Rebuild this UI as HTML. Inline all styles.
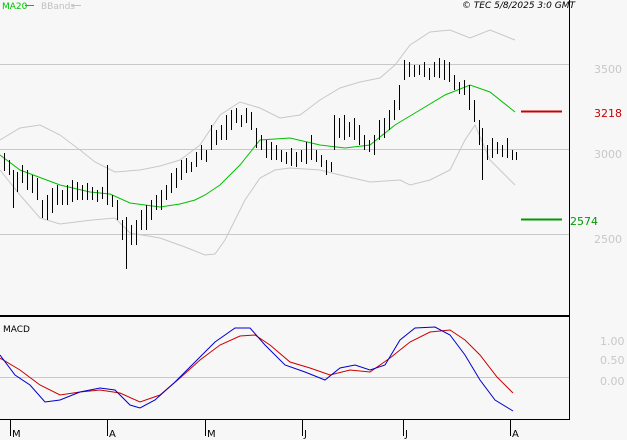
<!DOCTYPE html>
<html><head><style>
html,body{margin:0;padding:0;background:#f7f7f7;width:627px;height:440px;overflow:hidden;font-family:"DejaVu Sans","Liberation Sans",sans-serif}
svg{position:absolute;left:0;top:0}
</style></head><body>
<svg width="627" height="440" xmlns="http://www.w3.org/2000/svg" font-family="DejaVu Sans, Liberation Sans, sans-serif">
<rect width="627" height="440" fill="#f7f7f7"/>
<g stroke="#c8c8c8" stroke-width="1">
<line x1="0" y1="64.5" x2="569" y2="64.5"/>
<line x1="0" y1="149.5" x2="569" y2="149.5"/>
<line x1="0" y1="234.5" x2="569" y2="234.5"/>
<line x1="0" y1="377.5" x2="569" y2="377.5"/>
</g>
<text x="2" y="9" font-size="9" fill="#00c000">MA20</text>
<line x1="25" y1="5.5" x2="34" y2="5.5" stroke="#00c000"/>
<text x="41" y="9" font-size="9" fill="#c0c0c0">BBands</text>
<line x1="72" y1="5.5" x2="81" y2="5.5" stroke="#c0c0c0"/>
<text x="575" y="8" font-size="9" fill="#000" font-style="italic" text-anchor="end">© TEC 5/8/2025 3:0 GMT</text>
<polyline fill="none" stroke="#c8c8c8" points="0,140 20,128 40,125 60,135 80,150 95,162 115,172 140,170 160,166 180,160 200,145 220,115 240,102 260,108 280,118 300,115 320,100 340,88 360,82 380,78 395,65 410,45 430,32 450,30 470,38 490,30 515,40"/>
<polyline fill="none" stroke="#c8c8c8" points="0,170 20,195 40,218 60,224 92,220 115,218 130,233 160,238 185,247 205,255 215,254 225,240 245,200 260,178 275,170 290,168 320,170 340,175 370,182 400,180 410,185 430,180 450,170 465,140 475,125 490,160 515,185"/>
<polyline fill="none" stroke="#00c000" points="0,155 20,170 60,185 90,192 110,194 130,203 160,207 180,204 195,200 205,195 220,185 240,165 260,140 290,138 320,145 345,148 370,145 395,125 420,110 445,95 470,85 490,92 515,112"/>
<path fill="none" stroke="#000" stroke-width="1" shape-rendering="crispEdges" transform="translate(0.5,0)" d="
M4,153v18 M9,160v15 M13,170v38 M17,172v20 M22,165v18 M27,170v20 M32,175v18 M37,178v22 M42,200v18 M47,195v25 M52,188v25 M57,185v20 M62,190v15 M67,185v20 M72,180v22 M77,182v18 M82,185v15 M87,183v17 M92,187v13 M97,190v12 M102,187v12 M107,165v40 M112,195v12 M117,200v20 M122,220v20 M126,217v52 M131,225v20 M136,220v25 M141,210v20 M146,205v25 M151,200v20 M156,195v15 M161,190v20 M166,185v15 M171,173v20 M176,168v20 M181,160v20 M186,158v15 M191,162v10 M196,152v15 M201,145v15 M206,150v12 M211,125v25 M216,130v15 M221,125v15 M226,115v25 M231,110v20 M236,108v15 M241,115v12 M246,108v15 M251,112v18 M256,128v20 M261,135v15 M266,140v18 M271,142v18 M276,145v15 M281,150v12 M286,152v12 M291,148v18 M296,152v15 M301,150v12 M306,142v22 M311,135v25 M316,150v12 M321,155v12 M326,160v15 M331,162v10 M334,115v35 M339,118v20 M344,115v25 M349,122v15 M354,118v22 M359,125v20 M364,135v15 M369,140v12 M374,135v20 M379,120v20 M384,118v20 M389,110v20 M394,100v20 M399,85v25 M404,60v20 M409,62v15 M414,65v12 M419,65v10 M424,62v15 M429,68v12 M434,62v15 M439,58v20 M444,60v20 M449,62v20 M454,75v15 M459,82v12 M464,80v15 M469,85v25 M474,100v22 M479,120v25 M482,128v52 M487,145v15 M492,138v20 M497,142v12 M502,145v12 M507,138v20 M512,150v10 M516,152v8"/>
<line x1="521" y1="111.5" x2="562" y2="111.5" stroke="#cc0000" stroke-width="2"/>
<line x1="521" y1="219.5" x2="562" y2="219.5" stroke="#009900" stroke-width="2"/>
<g font-size="11" fill="#c8c8c8">
<text x="594" y="73">3500</text>
<text x="594" y="158">3000</text>
<text x="594" y="243">2500</text>
<text x="600" y="345">1.00</text>
<text x="600" y="364">0.50</text>
<text x="600" y="385">0.00</text>
</g>
<text x="594" y="117" font-size="11" fill="#cc0000">3218</text>
<text x="570" y="225" font-size="11" fill="#009900">2574</text>
<polyline fill="none" stroke="#cc0000" points="0,358 20,370 40,385 60,395 80,392 100,390 120,393 140,402 160,395 180,378 200,360 220,345 240,336 255,335 270,345 290,362 310,368 330,375 350,370 370,372 390,358 410,342 430,332 450,330 465,340 480,355 497,377 513,393"/>
<polyline fill="none" stroke="#0000cc" points="0,355 15,375 30,385 45,402 60,400 80,392 100,388 115,390 130,405 140,408 155,400 175,382 195,362 215,342 235,328 250,328 265,345 285,365 305,372 325,380 340,368 355,365 370,370 385,365 400,340 415,328 435,327 450,335 465,355 480,380 495,400 513,411"/>
<line x1="0" y1="316" x2="570" y2="316" stroke="#000" stroke-width="2"/>
<line x1="569.5" y1="0" x2="569.5" y2="420" stroke="#000"/>
<line x1="0" y1="419.5" x2="570" y2="419.5" stroke="#000"/>
<g stroke="#000"><line x1="10.5" y1="420" x2="10.5" y2="436"/><line x1="107.5" y1="420" x2="107.5" y2="436"/><line x1="205.5" y1="420" x2="205.5" y2="436"/><line x1="302.5" y1="420" x2="302.5" y2="436"/><line x1="403.5" y1="420" x2="403.5" y2="436"/><line x1="510.5" y1="420" x2="510.5" y2="436"/></g>
<g font-size="10" fill="#000">
<text x="12" y="437">M</text><text x="109" y="437">A</text><text x="207" y="437">M</text><text x="304" y="437">J</text><text x="405" y="437">J</text><text x="512" y="437">A</text>
</g>
<text x="3" y="332" font-size="9" fill="#000">MACD</text>
</svg>
</body></html>
